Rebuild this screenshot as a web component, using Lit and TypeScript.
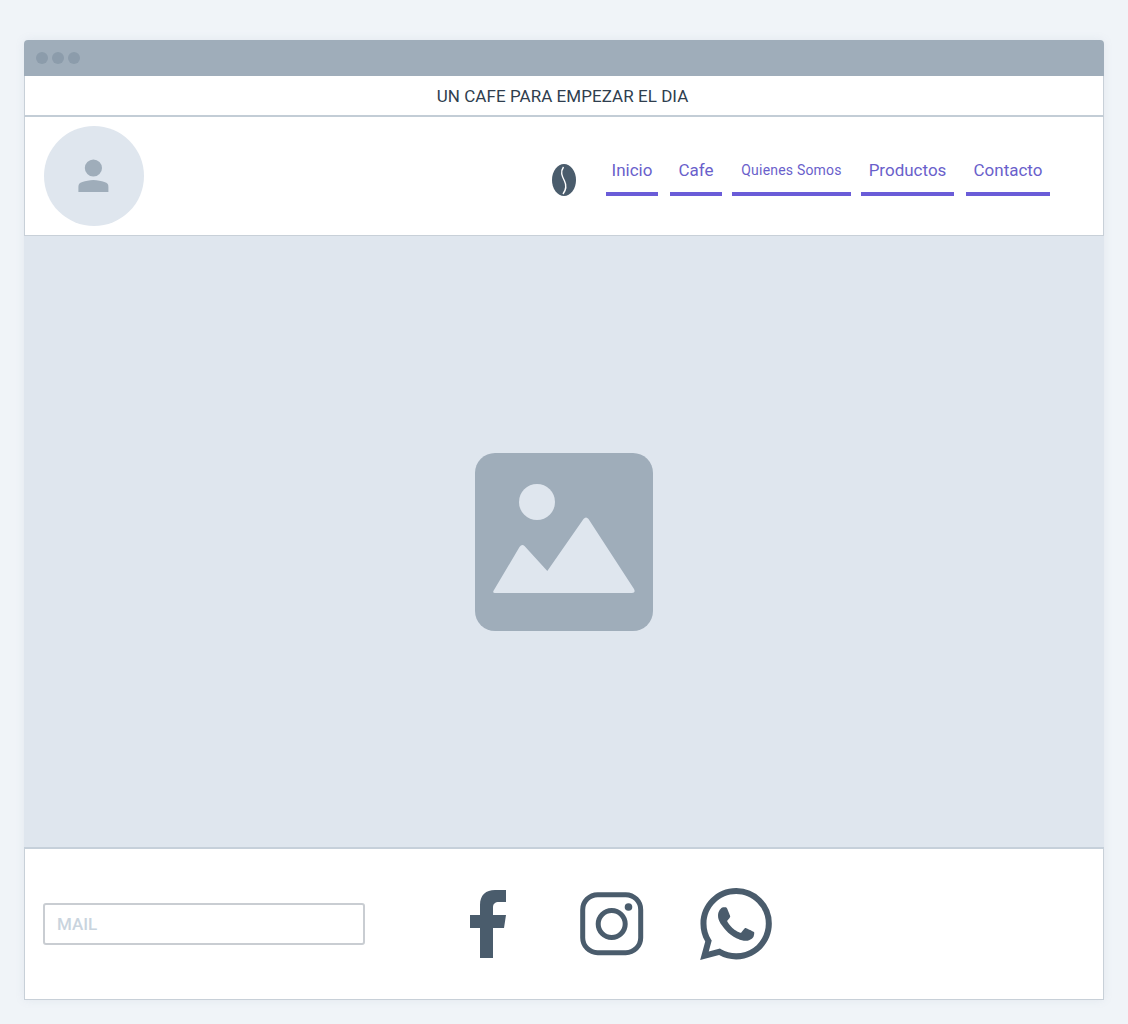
import {LitElement, html, css} from 'lit';
import {customElement} from 'lit/decorators.js';

const NAV = [
  {label: 'Inicio', width: 52, gap: 0, small: false},
  {label: 'Cafe', width: 52, gap: 12, small: false},
  {label: 'Quienes Somos', width: 119, gap: 10, small: true},
  {label: 'Productos', width: 93, gap: 10, small: false},
  {label: 'Contacto', width: 84, gap: 12, small: false},
];

@customElement('app-root')
export class AppRoot extends LitElement {
  static styles = css`
    :host {
      display: block;
      min-height: 1024px;
      box-sizing: border-box;
      padding: 40px 24px 24px;
      background: #f0f4f8;
      font-family: Roboto, 'Liberation Sans', sans-serif;
    }
    svg {
      display: block;
      flex: none;
    }
    .window {
      width: 1080px;
      height: 960px;
      display: flex;
      flex-direction: column;
      box-sizing: border-box;
      border-radius: 4px 4px 0 0;
      box-shadow: 0 0 10px rgba(130, 150, 170, 0.12);
    }
    .titlebar {
      height: 36px;
      flex: none;
      display: flex;
      align-items: center;
      gap: 4px;
      padding: 0 12px;
      box-sizing: border-box;
      background: #9fadba;
      border-radius: 4px 4px 0 0;
    }
    .dot {
      width: 12px;
      height: 12px;
      border-radius: 50%;
      background: #8c9cab;
    }
    .banner {
      height: 41px;
      flex: none;
      box-sizing: border-box;
      display: flex;
      align-items: center;
      justify-content: center;
      padding-right: 3px;
      background: #fff;
      border-left: 1px solid #c8d0d8;
      border-right: 1px solid #c8d0d8;
      border-bottom: 2px solid #c3cdd6;
      color: #2f3e4e;
      font-size: 17px;
      letter-spacing: 0.05px;
    }
    .header {
      height: 119px;
      flex: none;
      box-sizing: border-box;
      display: flex;
      background: #fff;
      border-left: 1px solid #c8d0d8;
      border-right: 1px solid #c8d0d8;
      border-bottom: 1px solid #c8d0d8;
      padding: 9px 0 0 19px;
    }
    .avatar {
      width: 100px;
      height: 100px;
      border-radius: 50%;
      background: #dfe6ee;
      display: flex;
      align-items: center;
      justify-content: center;
    }
    .bean {
      margin: 38px 30px 0 408px;
    }
    .nav {
      display: flex;
      align-items: flex-start;
      margin-top: 30px;
    }
    .link {
      box-sizing: border-box;
      height: 40px;
      display: flex;
      align-items: center;
      justify-content: center;
      padding-bottom: 8px;
      border-bottom: 4px solid #6a5cd8;
      color: #6a5fcb;
      font-size: 17px;
      white-space: nowrap;
    }
    .link.small {
      font-size: 14px;
      letter-spacing: 0.2px;
    }
    .hero {
      flex: 1;
      display: flex;
      align-items: center;
      justify-content: center;
      padding-top: 1px;
      background: #dfe6ee;
      border-bottom: 2px solid #c6d0da;
    }
    .footer {
      height: 151px;
      flex: none;
      box-sizing: border-box;
      display: flex;
      align-items: center;
      background: #fff;
      border: 1px solid #c8d0d8;
      border-top: none;
      padding-left: 18px;
    }
    .mail {
      width: 322px;
      height: 42px;
      box-sizing: border-box;
      display: flex;
      align-items: center;
      padding-left: 12px;
      border: 2px solid #c9cdd2;
      border-radius: 3px;
      color: #c9d4de;
      font-size: 17px;
      font-weight: 500;
    }
    .social {
      display: flex;
      align-items: center;
      margin-left: 105px;
    }
  `;

  render() {
    return html`
      <div class="window">
        <div class="titlebar">
          <span class="dot"></span><span class="dot"></span><span class="dot"></span>
        </div>
        <div class="banner">UN CAFE PARA EMPEZAR EL DIA</div>
        <div class="header">
          <div class="avatar">
            <svg width="32" height="34" viewBox="0.6 0 32 34" fill="#9fadba">
              <circle cx="16" cy="9" r="8.6" />
              <path d="M1 33v-5c0-3 1-4 4-5 3-1 7-2 11-2s8 1 11 2c3 1 4 2 4 5v5z" />
            </svg>
          </div>
          <svg class="bean" width="24" height="32" viewBox="0 0 24 32">
            <ellipse cx="12" cy="16" rx="12" ry="16" fill="#4a5c6c" />
            <path d="M11.500 3C8 8 10 12 12.500 17c2.500 5 1.500 9-1.500 13" fill="none" stroke="#fff" stroke-width="1.400" />
          </svg>
          <div class="nav">
            ${NAV.map(
              (n) => html`
                <div
                  class="link ${n.small ? 'small' : ''}"
                  style="width:${n.width}px;margin-left:${n.gap}px"
                >
                  ${n.label}
                </div>
              `
            )}
          </div>
        </div>
        <div class="hero">
          <svg width="178" height="178" viewBox="0 0 178 178">
            <rect width="178" height="178" rx="20" fill="#9fadba" />
            <circle cx="62" cy="49" r="18" fill="#dfe6ee" />
            <path
              d="M19 137L44.500 94q2.500-3.500 5-1L72.300 118 108.500 66q2.500-3 5 0L159 136q2 4-2 4H20q-3 0-1-3z"
              fill="#dfe6ee"
            />
          </svg>
        </div>
        <div class="footer">
          <div class="mail">MAIL</div>
          <div class="social">
            <svg width="36" height="68" viewBox="0 0 36 68" fill="#4a5c6c">
              <path d="M10 68V38H0V25h10V15C10 5 16 0 25 0h11v12h-7c-4 0-6 2-6 5v8h13l-2 13H23v30z" />
            </svg>
            <svg style="margin-left:74px" width="64" height="64" viewBox="0 0 64 64" fill="none" stroke="#4a5c6c">
              <rect x="2.700" y="2.700" width="58" height="58" rx="15" stroke-width="5" />
              <circle cx="31.700" cy="32" r="13.500" stroke-width="5" />
              <circle cx="48.500" cy="15" r="3.800" fill="#4a5c6c" stroke="none" />
            </svg>
            <svg style="margin-left:56px" width="72" height="72" viewBox="0 0 24 24" fill="#4a5c6c">
              <path
                d="M17.472 14.382c-.297-.149-1.758-.867-2.030-.967-.273-.099-.471-.148-.67.150-.197.297-.767.966-.940 1.164-.173.199-.347.223-.644.075-.297-.150-1.255-.463-2.390-1.475-.883-.788-1.480-1.761-1.653-2.059-.173-.297-.018-.458.130-.606.134-.133.298-.347.446-.520.149-.174.198-.298.298-.497.099-.198.050-.371-.025-.520-.075-.149-.669-1.612-.916-2.207-.242-.579-.487-.500-.669-.510-.173-.008-.371-.010-.570-.010-.198 0-.520.074-.792.372-.272.297-1.040 1.016-1.040 2.479 0 1.462 1.065 2.875 1.213 3.074.149.198 2.096 3.200 5.077 4.487.709.306 1.262.489 1.694.625.712.227 1.360.195 1.871.118.571-.085 1.758-.719 2.006-1.413.248-.694.248-1.289.173-1.413-.074-.124-.272-.198-.570-.347m-5.421 7.403h-.004a9.870 9.870 0 01-5.031-1.378l-.361-.214-3.741.982.998-3.648-.235-.374a9.860 9.860 0 01-1.510-5.260c.001-5.450 4.436-9.884 9.888-9.884 2.640 0 5.122 1.030 6.988 2.898a9.825 9.825 0 012.893 6.994c-.003 5.450-4.437 9.884-9.885 9.884m8.413-18.297A11.815 11.815 0 0012.050 0C5.495 0 .160 5.335.157 11.892c0 2.096.547 4.142 1.588 5.945L.057 24l6.305-1.654a11.882 11.882 0 005.683 1.448h.005c6.554 0 11.890-5.335 11.893-11.893a11.821 11.821 0 00-3.480-8.413z"
              />
            </svg>
          </div>
        </div>
      </div>
    `;
  }
}
